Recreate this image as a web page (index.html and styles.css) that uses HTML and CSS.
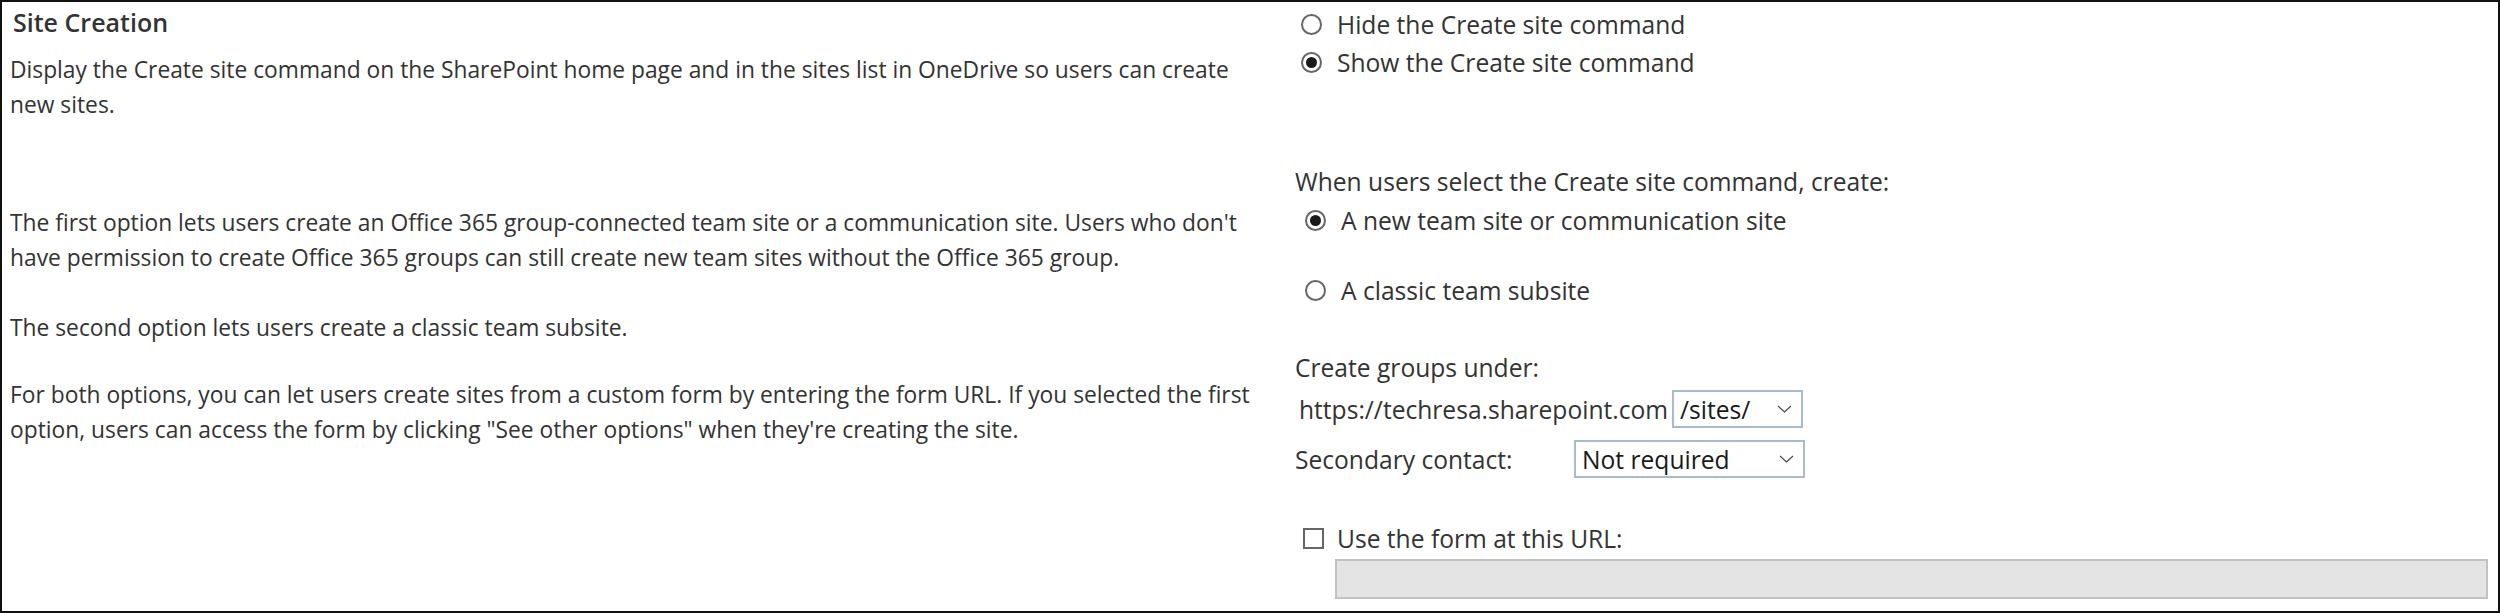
FILE: index.html
```html
<!DOCTYPE html>
<html lang="en">
<head>
    <meta charset="UTF-8">
    <meta name="viewport" content="width=device-width, initial-scale=1.0">
    <title>Site Creation</title>
    <link rel="stylesheet" href="styles.css">
</head>
<body>
    <div class="section">
        <div class="description">
            <h2 class="title">Site Creation</h2>
            <p class="intro">Display the Create site command on the SharePoint home page and in the sites list in OneDrive so users can create new sites.</p>
            <p class="first">The first option lets users create an Office 365 group-connected team site or a communication site. Users who don't have permission to create Office 365 groups can still create new team sites without the Office 365 group.</p>
            <p>The second option lets users create a classic team subsite.</p>
            <p class="last">For both options, you can let users create sites from a custom form by entering the form URL. If you selected the first option, users can access the form by clicking "See other options" when they're creating the site.</p>
        </div>

        <div class="controls">
            <div class="group">
                <label class="option"><span class="radio"></span>Hide the Create site command</label>
                <label class="option"><span class="radio checked"></span>Show the Create site command</label>
            </div>

            <div class="label create-label">When users select the Create site command, create:</div>
            <div class="group indented">
                <label class="option"><span class="radio checked"></span>A new team site or communication site</label>
                <label class="option classic"><span class="radio"></span>A classic team subsite</label>
            </div>

            <div class="label groups-label">Create groups under:</div>
            <div class="field-row">
                <span class="url">https://techresa.sharepoint.com</span>
                <div class="select sites-select">
                    <span>/sites/</span>
                    <svg class="chevron" width="15" height="8" viewBox="0 0 15 8"><path d="M1 1 L7.5 7 L14 1" fill="none" stroke="#444" stroke-width="1.1"/></svg>
                </div>
            </div>
            <div class="field-row contact-row">
                <span class="contact-label">Secondary contact:</span>
                <div class="select contact-select">
                    <span>Not required</span>
                    <svg class="chevron" width="15" height="8" viewBox="0 0 15 8"><path d="M1 1 L7.5 7 L14 1" fill="none" stroke="#444" stroke-width="1.1"/></svg>
                </div>
            </div>

            <label class="option form-option"><span class="checkbox"></span>Use the form at this URL:</label>
            <div class="url-input"></div>
        </div>
    </div>
</body>
</html>
```

FILE: styles.css
```css
body {
    margin: 0;
    background-color: #ffffff;
    font-family: "Open Sans", "Noto Sans", sans-serif;
    color: #333333;
}
.section {
    box-sizing: border-box;
    width: 2500px;
    height: 613px;
    border: 2px solid #111111;
    display: grid;
    grid-template-columns: 1285px 1fr;
    padding: 0 10px 0 8px;
}
.description {
    max-width: 1252px;
}
.title {
    margin: 2px 0 0 3px;
    font-size: 25px;
    font-weight: 600;
    line-height: 36px;
    color: #333333;
}
.description p {
    margin: 35px 0 0 0;
    font-size: 22.8px;
    line-height: 35px;
}
.description p.intro {
    margin-top: 12px;
}
.description p.first {
    margin-top: 83px;
}
.description p.last {
    margin-top: 32px;
}
.controls {
    padding-top: 3px;
    font-size: 24.6px;
}
.group {
    display: flex;
    flex-direction: column;
}
.group.indented {
    padding-left: 4px;
}
.option {
    display: flex;
    align-items: center;
    height: 38px;
    padding-left: 6px;
}
.radio {
    box-sizing: border-box;
    width: 21px;
    height: 21px;
    border: 2px solid #666666;
    border-radius: 50%;
    margin-right: 15px;
    display: flex;
    justify-content: center;
    align-items: center;
}
.radio.checked::after {
    content: "";
    width: 11px;
    height: 11px;
    border-radius: 50%;
    background-color: #1a1a1a;
}
.label {
    height: 38px;
    line-height: 38px;
}
.create-label {
    margin-top: 82px;
}
.option.classic {
    margin-top: 32px;
}
.groups-label {
    margin-top: 40px;
}
.field-row {
    display: flex;
    align-items: center;
    height: 38px;
    margin-top: 3px;
}
.url {
    padding-left: 4px;
    margin-right: 4px;
}
.contact-row {
    margin-top: 12px;
}
.contact-label {
    width: 279px;
}
.select {
    box-sizing: border-box;
    height: 38px;
    border: 2px solid #a8bacd;
    display: flex;
    align-items: center;
    justify-content: space-between;
    padding: 0 9px 0 6px;
    color: #1a1a1a;
}
.sites-select {
    width: 131px;
}
.contact-select {
    width: 231px;
}
.form-option {
    margin-top: 41px;
    padding-left: 8px;
}
.checkbox {
    box-sizing: border-box;
    width: 21px;
    height: 21px;
    border: 2px solid #666666;
    margin-right: 13px;
}
.url-input {
    box-sizing: border-box;
    margin: 2px 0 0 40px;
    height: 40px;
    background-color: #e4e4e4;
    border: 2px solid #c2c2c2;
}
```
